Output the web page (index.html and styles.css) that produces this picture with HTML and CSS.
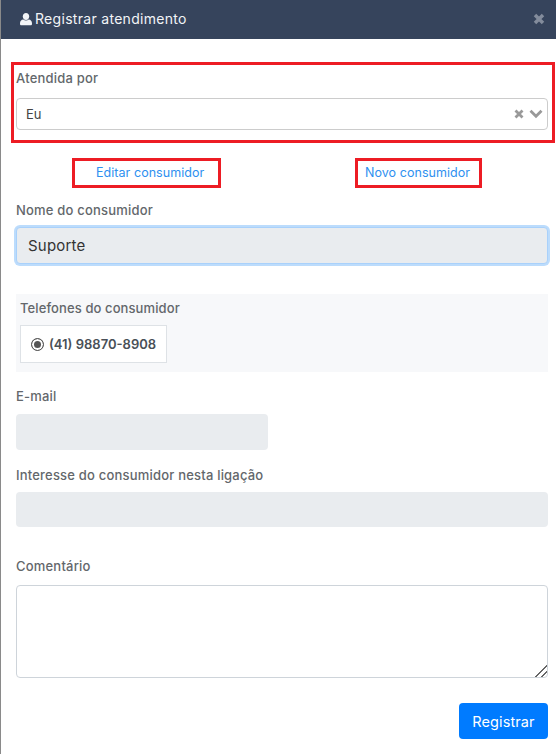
FILE: index.html
```html
<!DOCTYPE html>
<html lang="pt-BR">
<head>
    <meta charset="UTF-8">
    <meta name="viewport" content="width=device-width, initial-scale=1.0">
    <title>Registrar atendimento</title>
    <link rel="stylesheet" href="styles.css">
</head>
<body>
<div class="modal">
    <header class="modal__header">
        <h1 class="modal__title">
            <svg class="modal__icon" viewBox="0 0 14 14" width="14" height="14" aria-hidden="true">
                <path d="M7 1c1.900 0 3.200 1.500 3.200 3.400S8.900 8 7 8 3.800 6.300 3.800 4.400 5.100 1 7 1z"/>
                <path d="M4.300 7.400C5 8.100 5.900 8.500 7 8.500s2-.4 2.700-1.100c2 .2 3.300 1.500 3.300 4v.6c0 .8-.6 1.300-1.400 1.300H2.400C1.600 13.300 1 12.800 1 12v-.6c0-2.500 1.300-3.800 3.300-4z"/>
            </svg>
            Registrar atendimento
        </h1>
        <svg class="modal__close" viewBox="0 0 12 12" width="12" height="12" aria-hidden="true">
            <path d="M2 2l8 8M10 2l-8 8"/>
        </svg>
    </header>

    <form class="form">
        <div class="mark mark_select">
            <label class="form__label">Atendida por</label>
            <div class="select">
                <span>Eu</span>
                <span class="select__icons">
                    <svg viewBox="0 0 10 10" width="10" height="10" aria-hidden="true"><path d="M1.500 1.500l7 7M8.500 1.500l-7 7"/></svg>
                    <svg viewBox="0 0 14 10" width="14" height="10" aria-hidden="true"><path d="M1.500 1.800L7 7.300l5.500-5.500"/></svg>
                </span>
            </div>
        </div>

        <div class="links">
            <a class="mark mark_edit" href="#">Editar consumidor</a>
            <a class="mark mark_new" href="#">Novo consumidor</a>
        </div>

        <label class="form__label form__label_name">Nome do consumidor</label>
        <div class="form__input form__input_focus">Suporte</div>

        <div class="phones">
            <div class="phones__title">Telefones do consumidor</div>
            <label class="phones__item">
                <span class="radio"></span>
                (41) 98870-8908
            </label>
        </div>

        <label class="form__label form__label_email">E-mail</label>
        <div class="form__input form__input_email"></div>

        <label class="form__label form__label_interest">Interesse do consumidor nesta ligação</label>
        <div class="form__input form__input_interest"></div>

        <label class="form__label form__label_comment">Comentário</label>
        <textarea class="form__area"></textarea>

        <div class="form__footer">
            <button type="button" class="button">Registrar</button>
        </div>
    </form>
</div>
</body>
</html>
```

FILE: styles.css
```css
* {
    box-sizing: border-box;
}
body {
    margin: 0;
    height: 754px;
    overflow: hidden;
    background: #8a8a8a;
    padding-left: 1px;
    font-family: Inter, "Noto Sans", sans-serif;
    font-size: 13px;
    color: #495057;
}
.modal {
    height: 754px;
    background: #fff;
}
.modal__header {
    display: flex;
    align-items: center;
    justify-content: space-between;
    height: 39px;
    padding: 0 11px 2px 18px;
    background: #36445c;
}
.modal__title {
    display: flex;
    align-items: center;
    gap: 2px;
    margin: 0;
    font-size: 14px;
    letter-spacing: .3px;
    font-weight: 400;
    color: #f2f4f7;
}
.modal__icon {
    fill: #f2f4f7;
}
.modal__close {
    fill: none;
    stroke: #838c9c;
    stroke-width: 3.500;
}
.form {
    padding: 23px 7px 0 15px;
}
.form__label {
    display: block;
    font-size: 13px;
    line-height: 18px;
    letter-spacing: .2px;
    font-weight: 500;
    color: #63676b;
}
.mark {
    border: 3px solid #ed1c24;
}
.mark_select {
    height: 81px;
    margin: 0 -6px 15px -5px;
    padding: 4px 4px 0 2px;
}
.select {
    display: flex;
    align-items: center;
    justify-content: space-between;
    height: 32px;
    margin-top: 11px;
    padding: 0 4px 0 9px;
    border: 1px solid #ccc;
    border-radius: 4px;
    font-size: 13px;
    color: #444;
}
.select__icons {
    display: flex;
    align-items: center;
    gap: 5px;
}
.select__icons svg {
    fill: none;
    stroke: #999;
    stroke-width: 2.800;
}
.links {
    height: 30px;
    display: flex;
}
.links a {
    display: block;
    height: 30px;
    line-height: 24px;
    font-size: 12.500px;
    letter-spacing: .05px;
    color: #2e90f0;
    text-decoration: none;
}
.mark_edit {
    width: 149px;
    margin-left: 56px;
    padding-left: 21px;
}
.mark_new {
    width: 127px;
    margin-left: 134px;
    padding-left: 7px;
}
.form__label_name {
    margin-top: 13px;
}
.form__input {
    width: 532px;
    border-radius: 4px;
    background: #e9ecef;
}
.form__input_focus {
    height: 37px;
    margin-top: 8px;
    padding-left: 11px;
    line-height: 35px;
    font-size: 15px;
    letter-spacing: .2px;
    color: #333;
    border: 1px solid #a9d1fb;
    box-shadow: 0 0 0 2px #bcdcfc;
}
.phones {
    width: 532px;
    height: 78px;
    margin-top: 30px;
    padding: 5px 4px 0;
    background: #f7f8fa;
}
.phones__title {
    font-size: 13px;
    line-height: 18px;
    letter-spacing: .1px;
    font-weight: 500;
    color: #63676b;
}
.phones__item {
    display: flex;
    align-items: center;
    gap: 5px;
    width: 147px;
    height: 38px;
    margin-top: 8px;
    padding-left: 10px;
    border: 1px solid #dee2e6;
    background: #fff;
    font-size: 13px;
    font-weight: 600;
    color: #495057;
}
.radio {
    width: 13px;
    height: 13px;
    border: 1px solid #555;
    border-radius: 50%;
    background: #555;
    box-shadow: inset 0 0 0 2px #fff;
}
.form__label_email {
    margin-top: 15px;
}
.form__input_email {
    width: 252px;
    height: 36px;
    margin-top: 9px;
}
.form__label_interest {
    margin-top: 16px;
}
.form__input_interest {
    height: 35px;
    margin-top: 8px;
}
.form__label_comment {
    margin-top: 30px;
}
.form__area {
    display: block;
    width: 532px;
    height: 93px;
    margin-top: 10px;
    border: 1px solid #ced4da;
    border-radius: 4px;
    background: #fff;
}
.form__area::-webkit-resizer {
    background: linear-gradient(135deg, transparent 58%, #666 58% 65%, transparent 65% 78%, #666 78% 85%, transparent 85%);
}
.form__footer {
    display: flex;
    justify-content: flex-end;
    width: 532px;
    margin-top: 25px;
}
.button {
    width: 89px;
    height: 36px;
    padding: 0;
    border: 0;
    border-radius: 4px;
    background: #007bff;
    color: #fff;
    font-family: inherit;
    font-size: 14.500px;
    letter-spacing: .1px;
}
```
